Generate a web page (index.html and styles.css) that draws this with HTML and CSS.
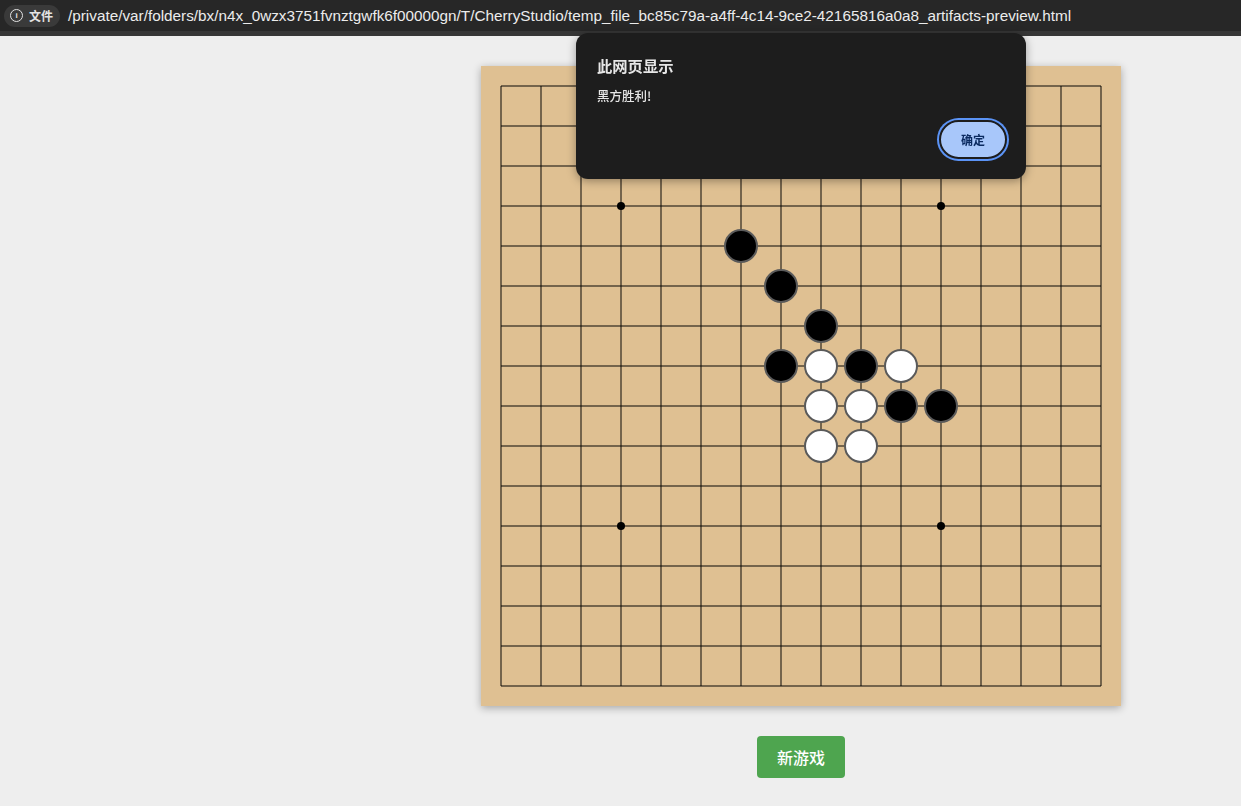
FILE: index.html
```html
<!DOCTYPE html>
<html lang="zh">
<head>
    <meta charset="UTF-8">
    <meta name="viewport" content="width=device-width, initial-scale=1.0">
    <title>五子棋</title>
    <link rel="stylesheet" href="styles.css">
</head>
<body>
    <div class="topbar">
        <span class="chip"><span class="info-icon">i</span>文件</span>
        <span class="url">/private/var/folders/bx/n4x_0wzx3751fvnztgwfk6f00000gn/T/CherryStudio/temp_file_bc85c79a-a4ff-4c14-9ce2-42165816a0a8_artifacts-preview.html</span>
    </div>
    <div class="topbar-edge"></div>

    <div class="page">
        <div class="game">
            <canvas id="board" class="board" width="640" height="640"></canvas>
            <button class="new-game">新游戏</button>
        </div>
    </div>

    <div class="alert">
        <div class="alert-title">此网页显示</div>
        <div class="alert-msg">黑方胜利!</div>
        <div class="alert-actions">
            <button class="alert-ok">确定</button>
        </div>
    </div>

    <script>
        // Plateau 15x15 intervalles
        const canvas = document.getElementById('board');
        const ctx = canvas.getContext('2d');
        const size = 16;
        const cell = 40;
        const pad = 20;

        const black = [[6,4],[7,5],[8,6],[7,7],[9,7],[10,8],[11,8]];
        const white = [[8,7],[10,7],[8,8],[9,8],[8,9],[9,9]];

        function drawGrid() {
            ctx.strokeStyle = 'rgba(0, 0, 0, 0.48)';
            ctx.lineWidth = 2;
            for (let i = 0; i < size; i++) {
                ctx.beginPath();
                ctx.moveTo(pad + i * cell, pad);
                ctx.lineTo(pad + i * cell, pad + (size - 1) * cell);
                ctx.stroke();
                ctx.beginPath();
                ctx.moveTo(pad, pad + i * cell);
                ctx.lineTo(pad + (size - 1) * cell, pad + i * cell);
                ctx.stroke();
            }
            // hoshi
            ctx.fillStyle = '#000';
            [[3,3],[11,3],[3,11],[11,11]].forEach(([x, y]) => {
                ctx.beginPath();
                ctx.arc(pad + x * cell, pad + y * cell, 4, 0, Math.PI * 2);
                ctx.fill();
            });
        }

        function drawStone(x, y, color) {
            ctx.beginPath();
            ctx.arc(pad + x * cell, pad + y * cell, 16, 0, Math.PI * 2);
            ctx.fillStyle = color;
            ctx.fill();
            ctx.strokeStyle = '#5a5a5a';
            ctx.lineWidth = 2;
            ctx.stroke();
        }

        drawGrid();
        black.forEach(([x, y]) => drawStone(x, y, '#000'));
        white.forEach(([x, y]) => drawStone(x, y, '#fff'));
    </script>
</body>
</html>
```

FILE: styles.css
```css
body {
    margin: 0;
    background: #eeeeee;
    font-family: "Noto Sans CJK SC", "Liberation Sans", sans-serif;
}
.topbar {
    height: 31px;
    background: #272727;
    display: flex;
    align-items: center;
    padding-left: 4px;
    gap: 8px;
    overflow: hidden;
}
.topbar-edge {
    height: 5px;
    background: #363636;
}
.chip {
    display: flex;
    align-items: center;
    gap: 6px;
    height: 22px;
    padding: 0 7px 0 6px;
    border-radius: 11px;
    background: #3a3a3a;
    color: #e3e3e3;
    font-size: 12px;
    font-weight: 600;
}
.info-icon {
    width: 11px;
    height: 11px;
    border: 1.2px solid #e3e3e3;
    border-radius: 50%;
    font-size: 8px;
    line-height: 11px;
    text-align: center;
    font-family: "Liberation Sans", sans-serif;
    font-weight: 700;
}
.url {
    color: #ececec;
    font-family: "Liberation Sans", sans-serif;
    font-size: 15.3px;
    white-space: nowrap;
}
.page {
    display: flex;
    justify-content: center;
    padding-left: 361px;
    padding-top: 30px;
}
.game {
    display: flex;
    flex-direction: column;
    align-items: center;
    gap: 30px;
}
.board {
    display: block;
    background: #dfc092;
    box-shadow: 0 2px 8px rgba(0, 0, 0, 0.3);
}
.new-game {
    width: 88px;
    height: 42px;
    border: none;
    border-radius: 4px;
    background: #4ea54f;
    color: #fff;
    font-family: "Noto Sans CJK SC", sans-serif;
    font-size: 16px;
    font-weight: 500;
    cursor: pointer;
}
.alert {
    position: absolute;
    left: 576px;
    top: 33px;
    width: 450px;
    height: 146px;
    box-sizing: border-box;
    padding: 21px 17px 17px 21px;
    background: #1d1d1d;
    border-radius: 12px;
    box-shadow: 0 2px 10px rgba(0, 0, 0, 0.35);
    color: #e6e6e6;
}
.alert-title {
    font-size: 15.3px;
    font-weight: 700;
    line-height: 22px;
}
.alert-msg {
    margin-top: 11px;
    font-size: 12.5px;
    font-weight: 500;
    line-height: 18px;
}
.alert-actions {
    display: flex;
    justify-content: flex-end;
    margin-top: 13px;
}
.alert-ok {
    width: 68px;
    height: 39px;
    margin: 2px;
    border: 2px solid #1d1d1d;
    border-radius: 20px;
    background: #a8c7fa;
    box-shadow: 0 0 0 2px #5b93f5;
    color: #0a2a60;
    font-family: "Noto Sans CJK SC", sans-serif;
    font-size: 12px;
    font-weight: 700;
    cursor: pointer;
}
```
